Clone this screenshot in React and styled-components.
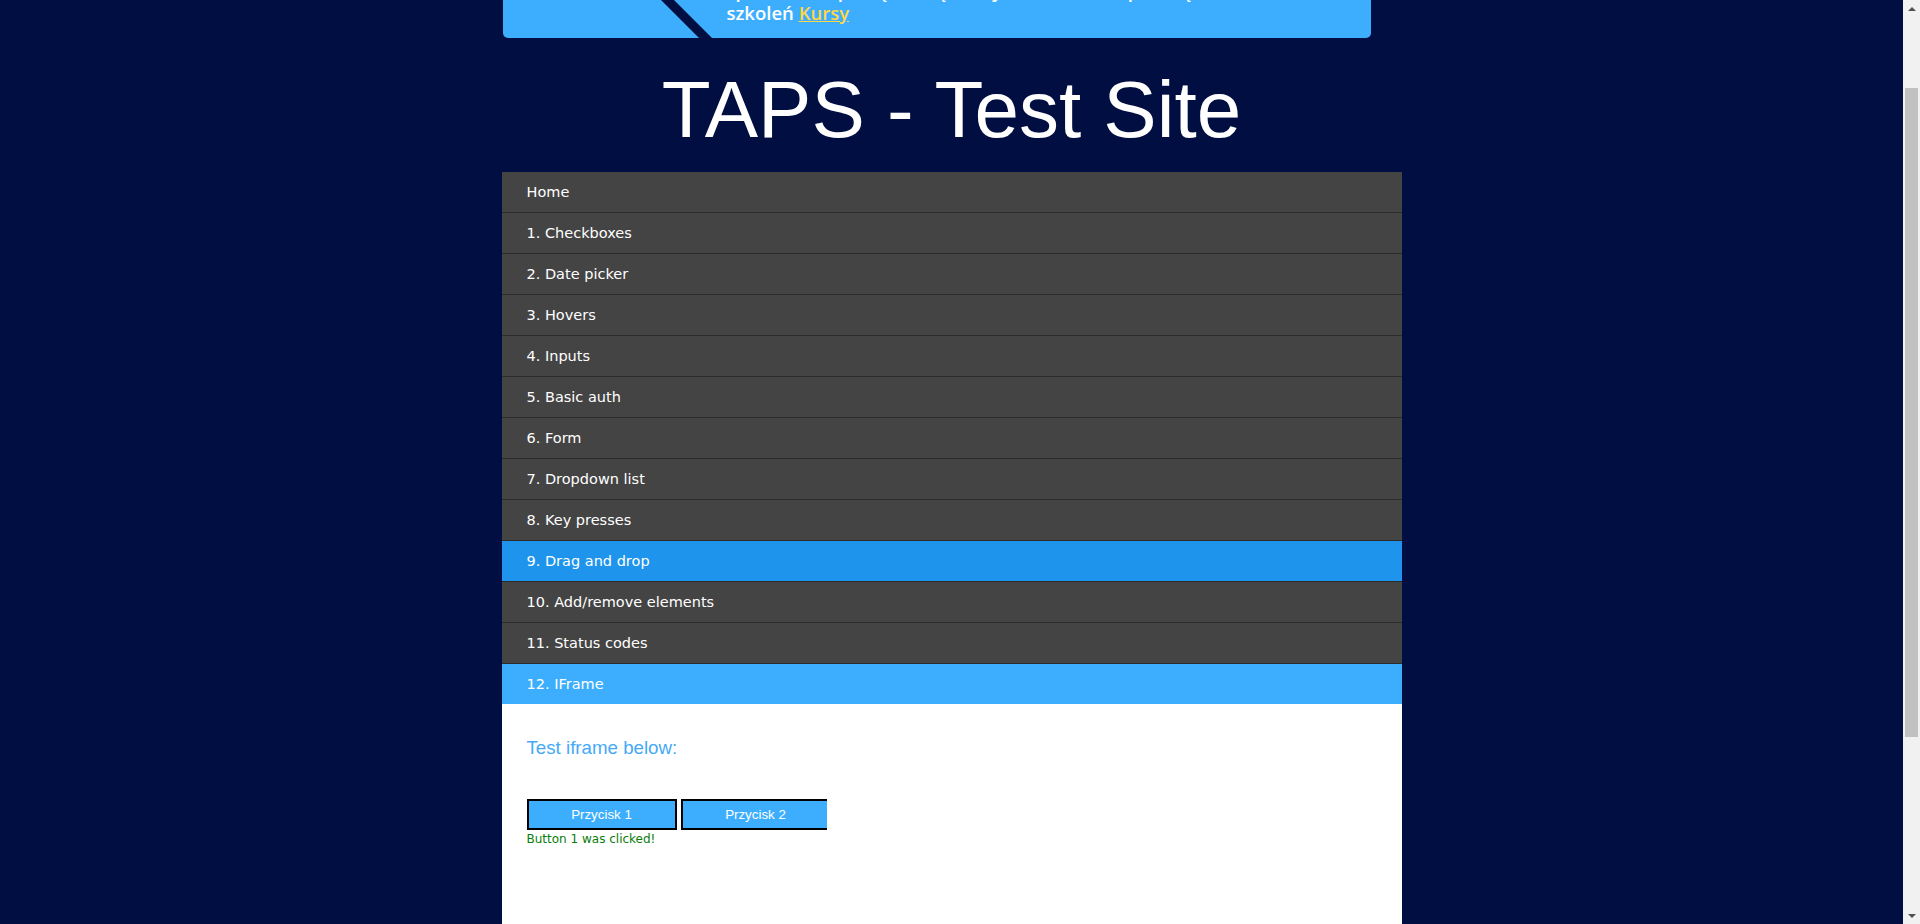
import React, { useLayoutEffect } from "react"
import styled, { createGlobalStyle } from "styled-components"

const GlobalStyle = createGlobalStyle`
  html, body {
    margin: 0;
    padding: 0;
    background: #000e41;
  }
  body {
    margin-right: 17px;
  }
  * {
    box-sizing: border-box;
  }
`

const Page = styled.div`
  width: 900px;
  margin: 0 auto;
`

const Promo = styled.div`
  position: relative;
  display: flex;
  width: 868px;
  height: 121px;
  margin-left: 1px;
  background: #3daefe;
  border-radius: 0 0 5px 5px;
  overflow: hidden;
`

const PromoLogo = styled.div`
  position: relative;
  width: 210px;
  flex-shrink: 0;

  &:after {
    content: "";
    position: absolute;
    left: 196px;
    bottom: 0;
    width: 13px;
    height: 100%;
    background: #000e41;
    transform: skewX(45deg);
    transform-origin: bottom left;
  }
`

const PromoText = styled.p`
  flex: 1;
  align-self: flex-end;
  margin: 0;
  padding: 0 14px 14px 14px;
  font-family: "Open Sans", "Noto Sans", sans-serif;
  font-weight: 600;
  font-size: 18.5px;
  line-height: 22px;
  color: #ffffff;
  white-space: nowrap;
`

const PromoLink = styled.a`
  color: #ffd64a;
  text-decoration: underline;
`

const Title = styled.h1`
  margin: 26px 0 16px;
  font-family: "Liberation Sans", Arial, sans-serif;
  font-weight: normal;
  font-size: 80px;
  line-height: 92px;
  text-align: center;
  color: #ffffff;
`

const Menu = styled.ul`
  list-style: none;
  margin: 0;
  padding: 0;
`

const MenuItem = styled.li`
  padding-left: 25px;
  display: flex;
  align-items: center;
  background: ${(p) => (p.$current ? "#3daefe" : p.$hover ? "#1e94ec" : "#444444")};
  border-bottom: ${(p) => (p.$last ? "none" : "1px solid #2b2b2b")};
  height: ${(p) => (p.$last ? "40px" : "41px")};
  font-family: "DejaVu Sans", Verdana, sans-serif;
  font-size: 14.5px;
  color: #ffffff;
  cursor: pointer;
`

const Content = styled.div`
  background: #ffffff;
  min-height: 481px;
  padding: 33px 25px 0;
`

const Heading = styled.h3`
  margin: 0 0 40px;
  font-family: "Liberation Sans", Arial, sans-serif;
  font-weight: normal;
  font-size: 18.72px;
  line-height: 22px;
  color: #45a9f7;
`

const Frame = styled.div`
  width: 300px;
  height: 150px;
  overflow: hidden;
`

const ButtonRow = styled.div`
  display: flex;
  gap: 4px;
  width: 400px;
`

const FrameButton = styled.button`
  width: 150px;
  height: 31px;
  flex-shrink: 0;
  border: 2px solid #000000;
  background: #3daefe;
  color: #ffffff;
  font-family: "Liberation Sans", Arial, sans-serif;
  font-size: 13.33px;
  padding: 0;
  cursor: pointer;
`

const Status = styled.div`
  margin-top: 2px;
  font-family: "DejaVu Sans", Verdana, sans-serif;
  font-size: 12px;
  line-height: 14px;
  color: #0a7d0a;
`

const Scrollbar = styled.div`
  position: fixed;
  top: 0;
  right: 0;
  width: 17px;
  height: 100vh;
  display: flex;
  flex-direction: column;
  align-items: center;
  background: #f1f1f1;
`

const ScrollArrow = styled.div`
  height: 17px;
  width: 17px;
  display: flex;
  align-items: center;
  justify-content: center;

  &:before {
    content: "";
    width: 0;
    height: 0;
    border-left: 4px solid transparent;
    border-right: 4px solid transparent;
    ${(p) => (p.$down ? "border-top: 4px solid #505050;" : "border-bottom: 4px solid #505050;")}
  }
`

const ScrollTrack = styled.div`
  flex: 1;
  width: 100%;
  padding: 71px 2px 0;
`

const ScrollThumb = styled.div`
  height: 649px;
  background: #c1c1c1;
`

const items = [
  "Home",
  "1. Checkboxes",
  "2. Date picker",
  "3. Hovers",
  "4. Inputs",
  "5. Basic auth",
  "6. Form",
  "7. Dropdown list",
  "8. Key presses",
  "9. Drag and drop",
  "10. Add/remove elements",
  "11. Status codes",
  "12. IFrame",
]

const App = () => {
  useLayoutEffect(() => {
    window.scrollTo(0, 83)
  }, [])

  return (
    <>
      <GlobalStyle />
      <Page>
        <Promo>
          <PromoLogo />
          <PromoText>
            Strona testowa przygotowana przez zespół TAPS,
            <br />
            sprawdź też pełną ofertę naszych kursów i zapisz się
            <br />
            szkoleń <PromoLink href="#">Kursy</PromoLink>
          </PromoText>
        </Promo>
        <Title>TAPS - Test Site</Title>
        <Menu>
          {items.map((label, i) => (
            <MenuItem
              key={label}
              $hover={i === 9}
              $current={i === items.length - 1}
              $last={i === items.length - 1}
            >
              {label}
            </MenuItem>
          ))}
        </Menu>
        <Content>
          <Heading>Test iframe below:</Heading>
          <Frame>
            <ButtonRow>
              <FrameButton>Przycisk 1</FrameButton>
              <FrameButton>Przycisk 2</FrameButton>
            </ButtonRow>
            <Status>Button 1 was clicked!</Status>
          </Frame>
        </Content>
      </Page>
      <Scrollbar>
        <ScrollArrow />
        <ScrollTrack>
          <ScrollThumb />
        </ScrollTrack>
        <ScrollArrow $down />
      </Scrollbar>
    </>
  )
}

export default App
